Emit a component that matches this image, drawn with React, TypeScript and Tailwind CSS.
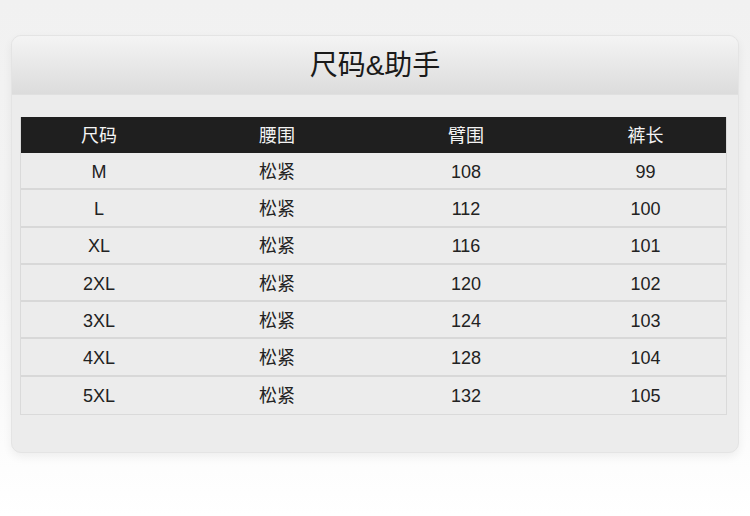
const rows = [
  ['M', '松紧', '108', '99'],
  ['L', '松紧', '112', '100'],
  ['XL', '松紧', '116', '101'],
  ['2XL', '松紧', '120', '102'],
  ['3XL', '松紧', '124', '103'],
  ['4XL', '松紧', '128', '104'],
  ['5XL', '松紧', '132', '105'],
]

const cols = 'grid grid-cols-[156px_200px_178px_173px]'

export default function App() {
  return (
    <div
      className="h-[516px] w-[750px] bg-gradient-to-b from-[#f1f1f1] via-[#f4f4f4] to-white pt-[35px] pl-[11px]"
      style={{ fontFamily: '"Liberation Sans", "Noto Sans CJK SC", sans-serif' }}
    >
      <div className="h-[418px] w-[728px] overflow-hidden rounded-[10px] border border-[#e4e4e4] bg-[#ececec] shadow-[0_4px_10px_rgba(0,0,0,0.06)]">
        <div className="flex h-[59px] items-center justify-center border-b border-[#e0e0e0] bg-gradient-to-b from-[#f4f4f4] to-[#dcdcdc]">
          <span className="pt-[2px] text-[28px] leading-none text-[#1a1a1a]">尺码&amp;助手</span>
        </div>

        <div className="pl-[8px] pt-[22px]">
          <div className="w-[707px] border border-[#dadada] border-t-0">
            <div className={`${cols} h-[36px] items-center bg-[#1f1f1f] pt-[3px] text-center text-[18px] text-[#f4f4f4]`}>
              <div>尺码</div>
              <div>腰围</div>
              <div>臂围</div>
              <div className="pl-[8px]">裤长</div>
            </div>
            {rows.map((r, i) => (
              <div
                key={i}
                className={`${cols} h-[37.3px] items-center pt-[3px] text-center text-[18px] text-[#222] ${i < rows.length - 1 ? 'border-b-2 border-[#d8d8d8]' : ''}`}
              >
                {r.map((c, j) => (
                  <div key={j} className={j === 3 ? 'pl-[8px]' : ''}>{c}</div>
                ))}
              </div>
            ))}
          </div>
        </div>
      </div>
    </div>
  )
}
